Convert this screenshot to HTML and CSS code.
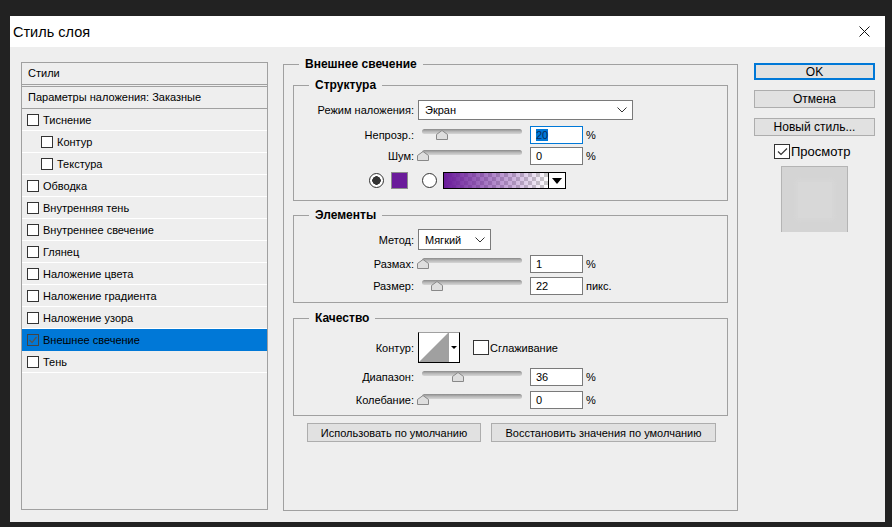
FILE: index.html
```html
<!DOCTYPE html>
<html lang="ru">
<head>
    <meta charset="UTF-8">
    <title>Стиль слоя</title>
    <link rel="stylesheet" href="styles.css">
</head>
<body>
<div class="dialog">
    <div class="titlebar">
        <span class="title">Стиль слоя</span>
        <svg class="close" width="11" height="11" viewBox="0 0 11 11">
            <path d="M0.5 0.5 L10.5 10.5 M10.5 0.5 L0.5 10.5" stroke="#111" stroke-width="1" fill="none"/>
        </svg>
    </div>

    <div class="dialog-body">
        <!-- left list of effects -->
        <div class="styles-panel">
            <div class="panel-head">Стили</div>
            <div class="panel-blend">Параметры наложения: Заказные</div>
            <ul class="style-list">
                <li class="style-item"><span class="check"></span>Тиснение</li>
                <li class="style-item sub"><span class="check"></span>Контур</li>
                <li class="style-item sub"><span class="check"></span>Текстура</li>
                <li class="style-item"><span class="check"></span>Обводка</li>
                <li class="style-item"><span class="check"></span>Внутренняя тень</li>
                <li class="style-item"><span class="check"></span>Внутреннее свечение</li>
                <li class="style-item"><span class="check"></span>Глянец</li>
                <li class="style-item"><span class="check"></span>Наложение цвета</li>
                <li class="style-item"><span class="check"></span>Наложение градиента</li>
                <li class="style-item"><span class="check"></span>Наложение узора</li>
                <li class="style-item selected">
                    <span class="check checked">
                        <svg width="10" height="10" viewBox="0 0 10 10"><path d="M1.5 5 L4 7.5 L8.5 2" stroke="#555" stroke-width="1.2" fill="none"/></svg>
                    </span>Внешнее свечение
                </li>
                <li class="style-item"><span class="check"></span>Тень</li>
            </ul>
        </div>

        <!-- settings -->
        <fieldset class="group main-group">
            <legend>Внешнее свечение</legend>

            <fieldset class="group sub-group structure">
                <legend>Структура</legend>
                <div class="row row-select">
                    <span class="row-label">Режим наложения:</span>
                    <div class="select select-wide">
                        <span>Экран</span>
                        <svg width="10" height="6" viewBox="0 0 10 6"><polyline points="0.5,0.5 5,5 9.5,0.5" stroke="#333" fill="none"/></svg>
                    </div>
                </div>
                <div class="row row-num gap-6">
                    <span class="row-label">Непрозр.:</span>
                    <div class="slider"><div class="track"></div><svg class="thumb" style="left:18px" width="12" height="10" viewBox="0 0 12 10"><polygon points="6,0.5 11.5,4.5 11.5,9.5 0.5,9.5 0.5,4.5" fill="#dedede" stroke="#888"/></svg></div>
                    <div class="num focused"><span class="sel">20</span></div>
                    <span class="unit">%</span>
                </div>
                <div class="row row-num gap-3">
                    <span class="row-label">Шум:</span>
                    <div class="slider"><div class="track"></div><svg class="thumb" style="left:-1px" width="12" height="10" viewBox="0 0 12 10"><polygon points="6,0.5 11.5,4.5 11.5,9.5 0.5,9.5 0.5,4.5" fill="#dedede" stroke="#888"/></svg></div>
                    <div class="num">0</div>
                    <span class="unit">%</span>
                </div>
                <div class="row row-color">
                    <span class="radio on"></span>
                    <span class="swatch"></span>
                    <span class="radio"></span>
                    <div class="gradient">
                        <div class="gradient-fill"></div>
                        <div class="gradient-drop"><span class="tri"></span></div>
                    </div>
                </div>
            </fieldset>

            <fieldset class="group sub-group elements">
                <legend>Элементы</legend>
                <div class="row row-method">
                    <span class="row-label">Метод:</span>
                    <div class="select select-short">
                        <span>Мягкий</span>
                        <svg width="10" height="6" viewBox="0 0 10 6"><polyline points="0.5,0.5 5,5 9.5,0.5" stroke="#333" fill="none"/></svg>
                    </div>
                </div>
                <div class="row row-num gap-5">
                    <span class="row-label">Размах:</span>
                    <div class="slider"><div class="track"></div><svg class="thumb" style="left:-1px" width="12" height="10" viewBox="0 0 12 10"><polygon points="6,0.5 11.5,4.5 11.5,9.5 0.5,9.5 0.5,4.5" fill="#dedede" stroke="#888"/></svg></div>
                    <div class="num">1</div>
                    <span class="unit">%</span>
                </div>
                <div class="row row-num gap-4">
                    <span class="row-label">Размер:</span>
                    <div class="slider"><div class="track"></div><svg class="thumb" style="left:13px" width="12" height="10" viewBox="0 0 12 10"><polygon points="6,0.5 11.5,4.5 11.5,9.5 0.5,9.5 0.5,4.5" fill="#dedede" stroke="#888"/></svg></div>
                    <div class="num">22</div>
                    <span class="unit">пикс.</span>
                </div>
            </fieldset>

            <fieldset class="group sub-group quality">
                <legend>Качество</legend>
                <div class="row row-contour">
                    <span class="row-label">Контур:</span>
                    <div class="contour">
                        <svg class="contour-pic" width="29" height="29" viewBox="0 0 29 29"><polygon points="0,29 29,0 29,29" fill="#a0a0a0"/></svg>
                        <div class="contour-drop"><span class="tri small"></span></div>
                    </div>
                    <span class="check big"></span>
                    <span class="check-text">Сглаживание</span>
                </div>
                <div class="row row-num gap-5">
                    <span class="row-label">Диапазон:</span>
                    <div class="slider"><div class="track"></div><svg class="thumb" style="left:34px" width="12" height="10" viewBox="0 0 12 10"><polygon points="6,0.5 11.5,4.5 11.5,9.5 0.5,9.5 0.5,4.5" fill="#dedede" stroke="#888"/></svg></div>
                    <div class="num">36</div>
                    <span class="unit">%</span>
                </div>
                <div class="row row-num gap-5">
                    <span class="row-label">Колебание:</span>
                    <div class="slider"><div class="track"></div><svg class="thumb" style="left:-1px" width="12" height="10" viewBox="0 0 12 10"><polygon points="6,0.5 11.5,4.5 11.5,9.5 0.5,9.5 0.5,4.5" fill="#dedede" stroke="#888"/></svg></div>
                    <div class="num">0</div>
                    <span class="unit">%</span>
                </div>
            </fieldset>

            <div class="default-buttons">
                <button class="btn btn-small btn-use">Использовать по умолчанию</button>
                <button class="btn btn-small btn-reset">Восстановить значения по умолчанию</button>
            </div>
        </fieldset>

        <!-- right column -->
        <div class="side">
            <button class="btn btn-side btn-ok">OK</button>
            <button class="btn btn-side">Отмена</button>
            <button class="btn btn-side">Новый стиль...</button>
            <div class="preview-check">
                <span class="check big">
                    <svg width="13" height="13" viewBox="0 0 13 13"><path d="M2 6.5 L5 9.5 L11 3.5" stroke="#333" stroke-width="1.2" fill="none"/></svg>
                </span>
                <span>Просмотр</span>
            </div>
            <div class="preview"><div class="preview-inner"></div></div>
        </div>
    </div>
</div>
</body>
</html>
```

FILE: styles.css
```css
* {
    box-sizing: border-box;
}

body {
    margin: 0;
    padding: 16px 0 0 10px;
    height: 527px;
    overflow: hidden;
    background-color: #222222;
    font-family: "Liberation Sans", Arial, sans-serif;
    font-size: 11px;
    color: #000;
}

.dialog {
    width: 875px;
    height: 506px;
    background-color: #eeeeee;
}

.titlebar {
    height: 31px;
    background-color: #ffffff;
    display: flex;
    align-items: center;
    justify-content: space-between;
    padding: 0 15px 0 3px;
}

.title {
    font-size: 14.5px;
}

.dialog-body {
    display: flex;
    align-items: flex-start;
    padding-left: 11px;
}

/* left list */
.styles-panel {
    width: 247px;
    height: 448px;
    margin-top: 15px;
    border: 1px solid #a0a0a0;
}

.panel-head,
.panel-blend {
    height: 22px;
    line-height: 21px;
    padding-left: 6px;
    border-bottom: 1px solid #a0a0a0;
}

.panel-blend {
    height: 23px;
    margin-top: 1px;
    border-top: 1px solid #a0a0a0;
}

.style-list {
    list-style: none;
    margin: 0;
    padding: 0;
}

.style-item {
    height: 22px;
    display: flex;
    align-items: center;
    border-bottom: 1px solid #ffffff;
}

.style-item.selected {
    background-color: #0078d7;
    border-bottom-color: #0078d7;
}

.check {
    width: 12px;
    height: 12px;
    border: 1px solid #333333;
    background-color: #ffffff;
    margin: 0 4px 0 5px;
    flex: none;
    display: flex;
    align-items: center;
    justify-content: center;
}

.style-item.sub .check {
    margin-left: 19px;
}

.check.checked {
    background-color: #0078d7;
    border-color: #444;
}

.check.big {
    width: 16px;
    height: 15px;
    margin: 0 1px 0 0;
}

/* fieldsets */
fieldset.group {
    margin: 0;
    padding: 0;
    border: 1px solid #a0a0a0;
    min-width: 0;
}

fieldset.group legend {
    font-weight: bold;
    font-size: 12px;
    line-height: 14px;
    padding: 0 6px;
}

fieldset.main-group {
    width: 455px;
    height: 454px;
    margin: 10px 0 0 15px;
    padding: 7px 9px 0 9px;
}

fieldset.main-group > legend {
    margin-left: 6px;
}

fieldset.sub-group > legend {
    margin-left: 15px;
}

fieldset.structure {
    padding: 8px 0 11px;
}

fieldset.elements {
    margin-top: 7px;
    padding: 7px 0 7px;
}

fieldset.quality {
    margin-top: 8px;
    padding: 7px 0 6px;
}

.row {
    display: flex;
    align-items: center;
}

.row-label {
    width: 120px;
    text-align: right;
    margin-right: 4px;
    flex: none;
}

.row-select { height: 20px; }
.row-method { height: 21px; }
.row-num { height: 18px; }
.row-contour { height: 31px; }

.gap-3 { margin-top: 3px; }
.gap-4 { margin-top: 4px; }
.gap-5 { margin-top: 5px; }
.gap-6 { margin-top: 6px; }

.select {
    height: 100%;
    background-color: #ffffff;
    border: 1px solid #7a7a7a;
    display: flex;
    align-items: center;
    justify-content: space-between;
    padding: 0 5px 0 6px;
}

.select-wide { width: 215px; }
.select-short { width: 73px; }

.slider {
    position: relative;
    width: 108px;
    height: 12px;
    margin-right: 4px;
}

.track {
    margin-left: 4px;
    width: 100px;
    height: 5px;
    border-radius: 3px;
    background: linear-gradient(#8a8a8a, #b8b8b8 50%, #d6d6d6);
}

.thumb {
    position: absolute;
    top: 1px;
}

.num {
    width: 53px;
    height: 100%;
    background-color: #ffffff;
    border: 1px solid #7a7a7a;
    padding-left: 5px;
    line-height: 16px;
}

.num.focused {
    border-color: #0078d7;
}

.sel {
    background-color: #0078d7;
    color: #0b2a5a;
}

.unit {
    margin-left: 3px;
}

/* colour row */
.row-color {
    height: 17px;
    margin-top: 7px;
    padding-left: 75px;
}

.radio {
    width: 15px;
    height: 15px;
    border-radius: 50%;
    border: 1px solid #333333;
    background-color: #ffffff;
    flex: none;
}

.radio.on {
    background: radial-gradient(circle, #333333 0 4px, #ffffff 4.5px);
}

.swatch {
    width: 17px;
    height: 17px;
    margin: 0 14px 0 7px;
    border: 1px solid #8c8c8c;
    background-color: #6a1b9a;
}

.gradient {
    width: 123px;
    height: 17px;
    margin-left: 6px;
    border: 1px solid #000000;
    display: flex;
}

.gradient-fill {
    flex: 1;
    background:
        linear-gradient(90deg, #6a1b9a, rgba(106, 27, 154, 0)),
        repeating-conic-gradient(#cccccc 0 25%, #ffffff 0 50%) 0 0 / 8px 8px;
}

.gradient-drop {
    width: 17px;
    border-left: 1px solid #000000;
    background-color: #ffffff;
    display: flex;
    align-items: center;
    justify-content: center;
}

.tri {
    width: 0;
    height: 0;
    border-left: 5px solid transparent;
    border-right: 5px solid transparent;
    border-top: 6px solid #000000;
}

.tri.small {
    border-left-width: 3px;
    border-right-width: 3px;
    border-top-width: 3px;
}

/* contour */
.contour {
    width: 42px;
    height: 31px;
    border: 1px solid #000000;
    border-top-color: #a0a0a0;
    background-color: #ffffff;
    display: flex;
    margin-right: 13px;
}

.contour-pic {
    display: block;
}

.contour-drop {
    flex: 1;
    border-left: 1px solid #a0a0a0;
    display: flex;
    align-items: center;
    justify-content: center;
}

.default-buttons {
    display: flex;
    gap: 10px;
    margin-top: 7px;
    padding-left: 14px;
}

/* buttons */
.btn {
    font-family: "Liberation Sans", Arial, sans-serif;
    color: #000;
    background-color: #e1e1e1;
    border: 1px solid #adadad;
    padding: 0;
    margin: 0;
}

.btn-small {
    height: 19px;
    font-size: 11px;
}

.btn-use { width: 174px; }
.btn-reset { width: 225px; }

.side {
    width: 121px;
    margin-top: 16px;
    margin-left: 16px;
    display: flex;
    flex-direction: column;
}

.btn-side {
    height: 18px;
    font-size: 12px;
    margin-bottom: 10px;
}

.btn-ok {
    height: 17px;
    border: 2px solid #0078d7;
}

.preview-check {
    display: flex;
    align-items: center;
    padding-left: 20px;
    margin-top: -2px;
    font-size: 13px;
}

.preview {
    width: 67px;
    height: 66px;
    margin: 7px 0 0 27px;
    background-color: #d4d4d4;
    border: 1px solid #b4b4b4;
    border-bottom: none;
    display: flex;
    align-items: center;
    justify-content: center;
}

.preview-inner {
    width: 34px;
    height: 36px;
    background-color: #d8d8d8;
    box-shadow: 0 0 5px 2px #d7d7d7;
}
```
